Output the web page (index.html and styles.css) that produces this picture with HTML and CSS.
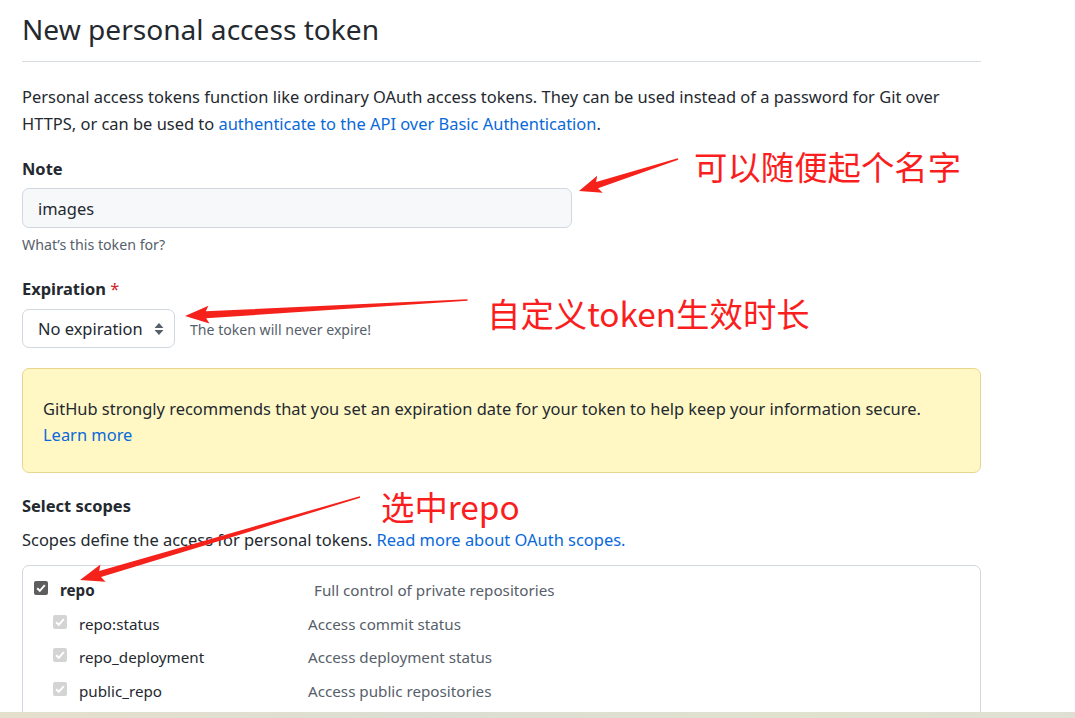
FILE: index.html
```html
<!DOCTYPE html>
<html lang="en">
<head>
<meta charset="utf-8">
<title>New personal access token</title>
<link rel="stylesheet" href="styles.css">
</head>
<body>
<div class="viewport">
  <main class="page">
    <h1 class="title">New personal access token</h1>
    <p class="intro">Personal access tokens function like ordinary OAuth access tokens. They can be used instead of a password for Git over HTTPS, or can be used to <a href="#">authenticate to the API over Basic Authentication</a>.</p>

    <div class="field">
      <label class="label">Note</label>
      <div class="input">images</div>
      <div class="hint">What’s this token for?</div>
    </div>

    <div class="field field-exp">
      <label class="label">Expiration <span class="req">*</span></label>
      <div class="exp-row">
        <div class="select">No expiration
          <svg class="updown" width="10" height="14" viewBox="0 0 10 14"><path d="M5 1 L9.5 6 H0.5 Z M5 13 L9.5 8 H0.5 Z" fill="#57606a"/></svg>
        </div>
        <span class="exp-note">The token will never expire!</span>
      </div>
    </div>

    <div class="flash">
      GitHub strongly recommends that you set an expiration date for your token to help keep your information secure.<br>
      <a href="#">Learn more</a>
    </div>

    <h3 class="label scopes-title">Select scopes</h3>
    <p class="scopes-desc">Scopes define the access for personal tokens. <a href="#">Read more about OAuth scopes.</a></p>

    <div class="scopes">
      <div class="row row-main">
        <span class="cb cb-dark"><svg width="14" height="14" viewBox="0 0 14 14"><path d="M3.2 7.2 L5.8 9.8 L10.8 4.2" stroke="#fff" stroke-width="2" fill="none"/></svg></span>
        <span class="name name-main">repo</span>
        <span class="desc">Full control of private repositories</span>
      </div>
      <div class="row row-sub">
        <span class="cb cb-light"><svg width="14" height="14" viewBox="0 0 14 14"><path d="M3.2 7.2 L5.8 9.8 L10.8 4.2" stroke="#fff" stroke-width="2" fill="none"/></svg></span>
        <span class="name name-sub">repo:status</span>
        <span class="desc">Access commit status</span>
      </div>
      <div class="row row-sub">
        <span class="cb cb-light"><svg width="14" height="14" viewBox="0 0 14 14"><path d="M3.2 7.2 L5.8 9.8 L10.8 4.2" stroke="#fff" stroke-width="2" fill="none"/></svg></span>
        <span class="name name-sub">repo_deployment</span>
        <span class="desc">Access deployment status</span>
      </div>
      <div class="row row-sub">
        <span class="cb cb-light"><svg width="14" height="14" viewBox="0 0 14 14"><path d="M3.2 7.2 L5.8 9.8 L10.8 4.2" stroke="#fff" stroke-width="2" fill="none"/></svg></span>
        <span class="name name-sub">public_repo</span>
        <span class="desc">Access public repositories</span>
      </div>
    </div>
  </main>
  <div class="strip"></div>

  <svg class="arrows" width="1075" height="718" viewBox="0 0 1075 718">
    <g fill="#f5221b">
      <polygon transform="translate(579 191) rotate(-17.9)" points="0,0 22,-9 19,-3.2 104,-0.8 104,0.8 19,3.2 22,9"/>
      <polygon transform="translate(185 316) rotate(-3.25)" points="0,0 24,-9 21,-3.5 283,-0.8 283,0.8 21,3.5 24,9"/>
      <polygon transform="translate(80 580) rotate(-16.5)" points="0,0 24,-9 21,-3.2 292,-0.8 292,0.8 21,3.2 24,9"/>
    </g>
  </svg>
  <div class="note note-1">可以随便起个名字</div>
  <div class="note note-2">自定义token生效时长</div>
  <div class="note note-3">选中repo</div>
</div>
</body>
</html>
```

FILE: styles.css
```css
* { box-sizing: border-box; }

html, body {
  margin: 0;
  padding: 0;
  background: #ffffff;
}

body {
  font-family: "Noto Sans", "Liberation Sans", sans-serif;
  font-size: 16.45px;
  color: #24292f;
}

.viewport {
  position: relative;
  width: 1075px;
  height: 718px;
  overflow: hidden;
  display: flex;
  flex-direction: column;
}

.page {
  flex: 1;
  overflow: hidden;
  padding-left: 22px;
  width: 981px;
}

a { color: #0969da; text-decoration: none; }

.title {
  margin: 9px 0 0;
  font-size: 28.1px;
  line-height: 40px;
  font-weight: 400;
  padding-bottom: 12px;
  border-bottom: 1px solid #d8dee4;
}

.intro {
  margin: 21px 0 0;
  line-height: 27px;
}

.field { margin-top: 19px; }
.field-exp { margin-top: 20px; }

.label {
  display: block;
  margin: 0;
  font-size: 16.45px;
  font-weight: 700;
  line-height: 26px;
}

.req { color: #cf222e; font-weight: 400; }

.input {
  margin-top: 6px;
  width: 550px;
  height: 40px;
  padding: 0 15px;
  display: flex;
  align-items: center;
  background: #f6f8fa;
  border: 1px solid #d0d7de;
  border-radius: 7px;
}

.hint {
  margin-top: 6px;
  font-size: 14.2px;
  line-height: 22px;
  color: #57606a;
}

.exp-row {
  margin-top: 7px;
  display: flex;
  align-items: center;
  gap: 15px;
}

.select {
  width: 153px;
  height: 39px;
  padding: 0 10px 0 15px;
  display: flex;
  align-items: center;
  justify-content: space-between;
  border: 1px solid #d0d7de;
  border-radius: 7px;
  background: #ffffff;
}

.exp-note {
  font-size: 14.1px;
  color: #57606a;
  padding-top: 2px;
}

.flash {
  margin-top: 20px;
  padding: 27px 20px 24px;
  line-height: 26px;
  background: #fff8c5;
  border: 1px solid #e8d68f;
  border-radius: 7px;
}

.scopes-title { margin-top: 20px; }

.scopes-desc {
  margin: 8px 0 0;
  line-height: 26px;
}

.scopes {
  margin-top: 12px;
  border: 1px solid #d0d7de;
  border-radius: 7px;
  padding-top: 7px;
  height: 300px;
  font-size: 15.2px;
}

.row {
  display: flex;
  align-items: center;
  height: 33.7px;
}

.row-main { padding-left: 11px; }
.row-sub { padding-left: 30px; }

.cb {
  width: 14px;
  height: 14px;
  border-radius: 2px;
  display: flex;
  margin-top: -4px;
}
.cb-dark { background: #5e5e5e; }
.cb-light { background: #d4d4d4; }

.name { margin-left: 12px; }
.name-main { width: 254px; font-weight: 700; }
.name-sub { width: 229px; }

.desc { color: #57606a; }

.strip {
  height: 6px;
  flex: none;
  background: linear-gradient(90deg, #e5dfcd 0%, #dcded3 40%, #e1e1cf 75%, #dfdfd4 100%);
}

.arrows {
  position: absolute;
  left: 0;
  top: 0;
  pointer-events: none;
}

.note {
  position: absolute;
  font-family: "Noto Sans CJK SC", "Noto Sans", sans-serif;
  font-size: 33.4px;
  line-height: 40px;
  color: #fa1e1e;
  white-space: nowrap;
}
.note-1 { left: 694px; top: 146px; }
.note-2 { left: 487px; top: 293px; }
.note-3 { left: 381px; top: 486px; }
```
